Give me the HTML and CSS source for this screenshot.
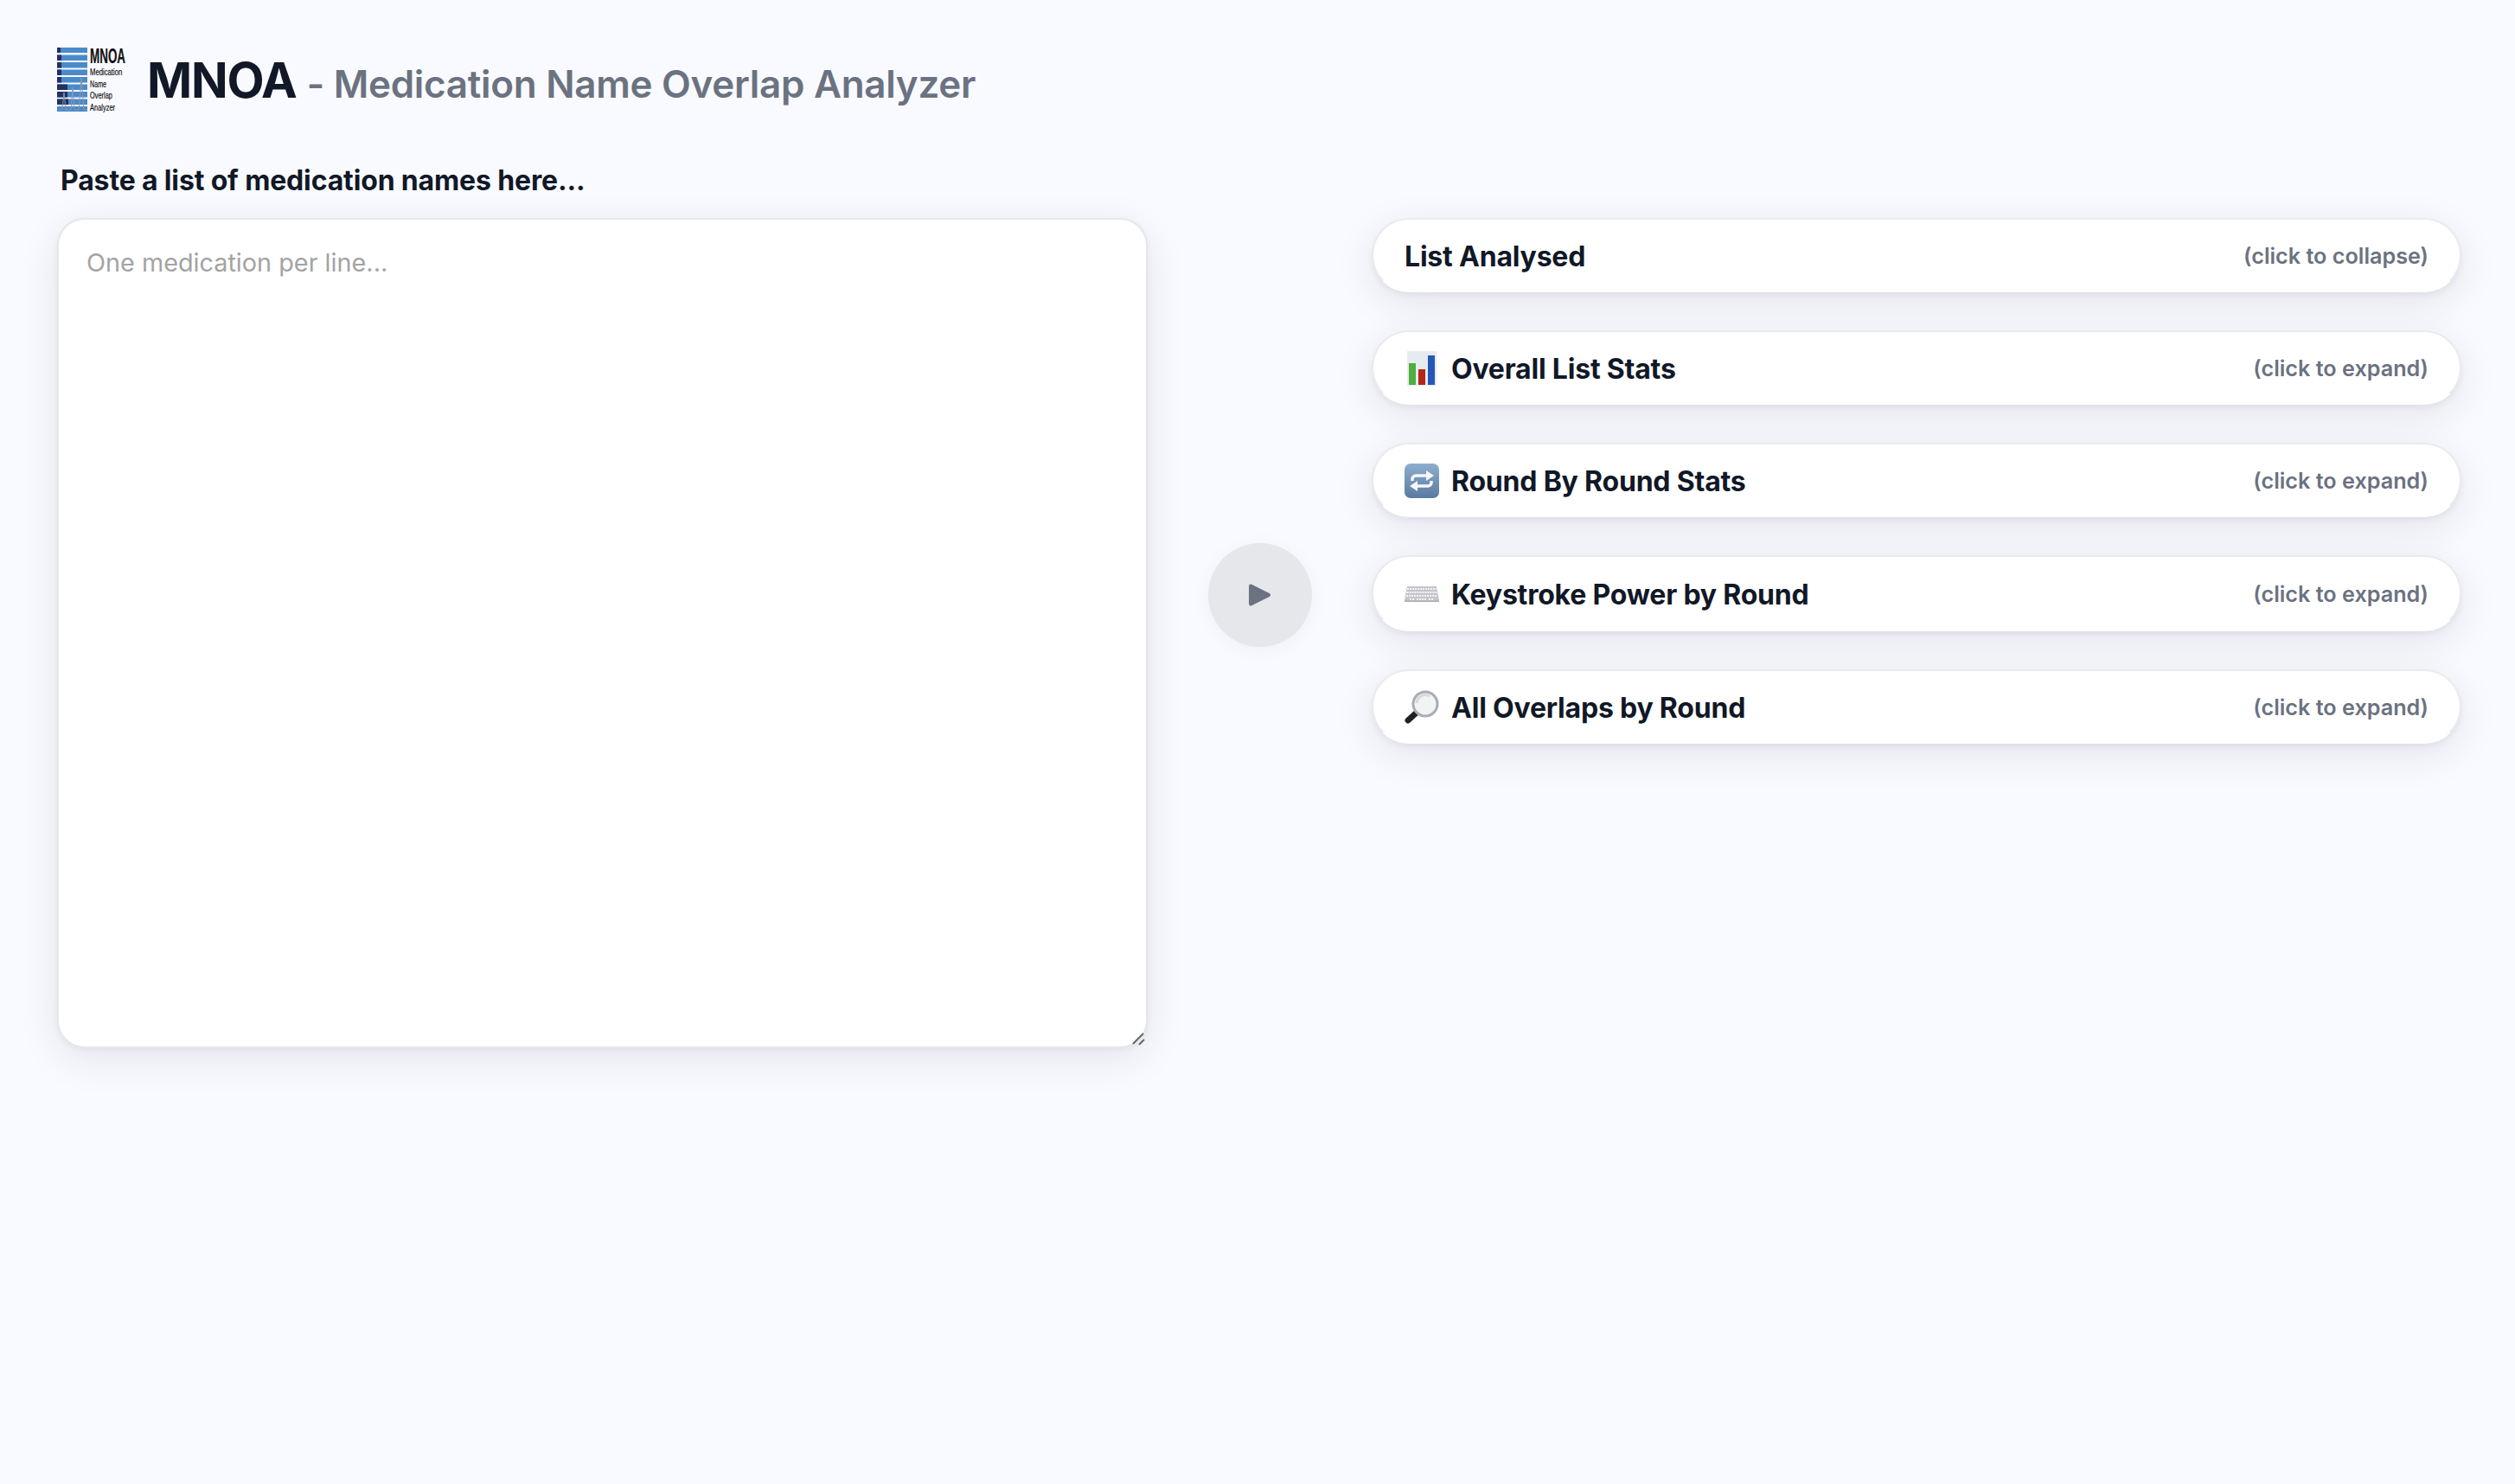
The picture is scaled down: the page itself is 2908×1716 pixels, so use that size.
FILE: index.html
```html
<!DOCTYPE html>
<html lang="en">
<head>
  <meta charset="UTF-8" />
  <title>MNOA - Medication Name Overlap Analyzer</title>
  <link rel="stylesheet" href="styles.css">
</head>
<body>
  <div class="page">
    <header class="header">
      <svg class="logo" viewBox="0 0 82 76" width="82" height="76" role="img" aria-label="MNOA logo">
        <g fill="#4a8acb">
          <rect x="0" y="0" width="35" height="6"/>
          <rect x="0" y="8.5" width="35" height="6.5"/>
          <rect x="0" y="17" width="35" height="6.5"/>
          <rect x="0" y="25.5" width="35" height="6.5"/>
          <rect x="0" y="34" width="35" height="6.5"/>
          <rect x="0" y="42.5" width="35" height="6.5"/>
          <rect x="0" y="51" width="35" height="6.5"/>
          <rect x="0" y="59.5" width="35" height="6.5"/>
          <rect x="0" y="68" width="35" height="6"/>
        </g>
        <g fill="#22315f">
          <rect x="0" y="0" width="4" height="6"/>
          <rect x="0" y="8.5" width="5" height="6.5"/>
          <rect x="0" y="17" width="5" height="6.5"/>
          <rect x="0" y="25.5" width="5" height="6.5"/>
          <rect x="0" y="34" width="5" height="6.5"/>
          <rect x="0" y="42.5" width="12" height="6.5"/>
          <rect x="0" y="51" width="12" height="6.5"/>
          <rect x="0" y="59.5" width="13" height="6.5"/>
        </g>
        <path d="M3 72h3l2-20 2 20h6l2-26 2 26h5l3-37 3 37h4" fill="none" stroke="#8d97a6" stroke-width="1"/>
        <g class="logo-text">
          <text class="logo-name" transform="translate(38 18) scale(0.585 1)" font-size="23">MNOA</text>
          <text transform="translate(38 32) scale(0.7 1)" font-size="11">Medication</text>
          <text transform="translate(38 46) scale(0.65 1)" font-size="11">Name</text>
          <text transform="translate(38 59) scale(0.675 1)" font-size="11">Overlap</text>
          <text transform="translate(38 73) scale(0.68 1)" font-size="11">Analyzer</text>
        </g>
      </svg>
      <h1 class="title">MNOA <span class="subtitle">- Medication Name Overlap Analyzer</span></h1>
    </header>

    <main class="layout">
      <label class="input-label" for="med-list">Paste a list of medication names here...</label>

      <div class="input-wrap">
        <textarea id="med-list" class="med-input" placeholder="One medication per line..."></textarea>
        <svg class="grip" viewBox="0 0 15 15" width="15" height="15">
          <path d="M1 13L13 1M8 14l6-6" stroke="#666" stroke-width="2" fill="none"/>
        </svg>
      </div>

      <div class="run-col">
        <button class="run-btn" type="button" aria-label="Analyze">
          <svg viewBox="3 1 23 24" width="27" height="26"><path d="M3 3.5v19a2 2 0 0 0 2.9 1.8l19-9.5a2 2 0 0 0 0-3.6l-19-9.5A2 2 0 0 0 3 3.5z" fill="#6b7280"/></svg>
        </button>
      </div>

      <section class="panels">
        <div class="panel">
          <span class="panel-title">List Analysed</span>
          <span class="panel-hint">(click to collapse)</span>
        </div>

        <div class="panel">
          <span class="panel-title">
            <svg class="emoji" viewBox="0 0 40 40">
              <rect x="3" y="0" width="34" height="40" fill="#e6ebf0"/>
              <rect x="5" y="14" width="8" height="25" fill="#4fae3c"/>
              <rect x="16" y="21" width="8" height="18" fill="#b3261a"/>
              <rect x="27" y="5" width="8" height="34" fill="#2358b8"/>
            </svg>
            Overall List Stats
          </span>
          <span class="panel-hint">(click to expand)</span>
        </div>

        <div class="panel">
          <span class="panel-title">
            <svg class="emoji" viewBox="0 0 40 40">
              <defs>
                <linearGradient id="repeat-bg" x1="0" y1="0" x2="0" y2="1">
                  <stop offset="0" stop-color="#8eaecf"/>
                  <stop offset="1" stop-color="#5a7b9f"/>
                </linearGradient>
              </defs>
              <rect width="40" height="40" rx="7" fill="url(#repeat-bg)"/>
              <g fill="none" stroke="#f4f7fa" stroke-width="3.500">
                <path d="M9 20v-2a4 4 0 0 1 4-4h13"/>
                <path d="M31 20v2a4 4 0 0 1-4 4H14"/>
              </g>
              <path d="M25 8l9 6-9 6zM15 20l-9 6 9 6z" fill="#f4f7fa"/>
            </svg>
            Round By Round Stats
          </span>
          <span class="panel-hint">(click to expand)</span>
        </div>

        <div class="panel panel-tall">
          <span class="panel-title">
            <svg class="emoji" viewBox="0 0 40 40">
              <path d="M3 11h34l3 16v2H0v-2z" fill="#c4c6ca"/>
              <g stroke="#f4f4f5" stroke-width="2.200" stroke-dasharray="2 1">
                <path d="M3 14h34M2.500 18h35M2 22h36"/>
                <path d="M6 26h6M14 26h12M28 26h6"/>
              </g>
              <rect y="27.500" width="40" height="1.500" fill="#a9abaf"/>
            </svg>
            Keystroke Power by Round
          </span>
          <span class="panel-hint">(click to expand)</span>
        </div>

        <div class="panel">
          <span class="panel-title">
            <svg class="emoji" viewBox="0 0 40 40">
              <path d="M4 35L15 25" fill="none" stroke="#1f2224" stroke-width="7" stroke-linecap="round"/>
              <circle cx="24" cy="16" r="14" fill="#f1f3f5" stroke="#a8aeb6" stroke-width="3"/>
              <path d="M14 15a10 10 0 0 1 15-8" fill="none" stroke="#d6dadf" stroke-width="3"/>
            </svg>
            All Overlaps by Round
          </span>
          <span class="panel-hint">(click to expand)</span>
        </div>
      </section>
    </main>
  </div>
</body>
</html>
```

FILE: styles.css
```css
html, body {
  margin: 0;
  padding: 0;
  height: 100%;
  background: #f9faff;
  font-family: 'Inter', sans-serif;
  color: #111827;
}

.page {
  padding: 53px 62px 0 66px;
}

/* Header */
.header {
  display: flex;
  align-items: center;
  gap: 22px;
  height: 80px;
}

.logo {
  flex: none;
  overflow: visible;
}

.logo-text {
  font-family: 'Liberation Sans', sans-serif;
  fill: #111;
  stroke: #111;
  stroke-width: 0.2;
}

.logo-name {
  font-weight: 700;
}

.title {
  margin: 0;
  font-size: 56px;
  font-weight: 700;
  letter-spacing: -1.2px;
  color: #111827;
}

.subtitle {
  font-size: 44px;
  font-weight: 600;
  letter-spacing: -0.3px;
  color: #6b7280;
}

/* Main layout */
.layout {
  display: grid;
  grid-template-columns: 1261px 259px 1260px;
  grid-template-rows: auto auto;
  margin-top: 50px;
}

.input-label {
  grid-column: 1 / -1;
  margin: 0 0 17px 4px;
  font-size: 32px;
  font-weight: 700;
  letter-spacing: -0.15px;
  line-height: 52px;
}

.input-wrap {
  position: relative;
  height: 960px;
}

.med-input {
  display: block;
  box-sizing: border-box;
  width: 100%;
  height: 100%;
  padding: 30px 32px;
  border: 2px solid #e5e7eb;
  border-radius: 32px;
  background: #fff;
  box-shadow: 0 12px 48px rgba(17, 24, 39, 0.09), 0 2px 6px rgba(17, 24, 39, 0.05);
  font-family: 'Inter', sans-serif;
  font-size: 28.8px;
  line-height: 40px;
  outline: none;
}

.med-input::placeholder {
  color: #a3a3a3;
}

.med-input::-webkit-resizer {
  background: transparent;
}

.grip {
  position: absolute;
  right: 3px;
  bottom: 3px;
  pointer-events: none;
}

.run-col {
  display: flex;
  justify-content: center;
  padding-top: 376px;
}

.run-btn {
  display: flex;
  align-items: center;
  justify-content: center;
  width: 120px;
  height: 120px;
  padding: 0;
  border: none;
  border-radius: 50%;
  background: #e5e7eb;
  box-shadow: 0 4px 24px rgba(17, 24, 39, 0.04);
  cursor: pointer;
}

/* Result panels */
.panels {
  display: flex;
  flex-direction: column;
  gap: 44px;
}

.panel {
  display: flex;
  align-items: center;
  justify-content: space-between;
  box-sizing: border-box;
  height: 86px;
  padding: 2px 36px 0;
  border: 2px solid #e9ebef;
  border-bottom-color: #fff;
  border-radius: 43px;
  background: #fff;
  box-shadow: 0 12px 48px rgba(17, 24, 39, 0.09), 0 4px 6px rgba(17, 24, 39, 0.05);
  cursor: pointer;
}

.panel-tall {
  height: 88px;
}

.panel-title {
  display: flex;
  align-items: center;
  gap: 14px;
  font-size: 32px;
  font-weight: 700;
  letter-spacing: -0.2px;
}

.emoji {
  width: 40px;
  height: 40px;
  flex: none;
}

.panel-hint {
  font-size: 25.2px;
  font-weight: 600;
  color: #6b7280;
}
```
